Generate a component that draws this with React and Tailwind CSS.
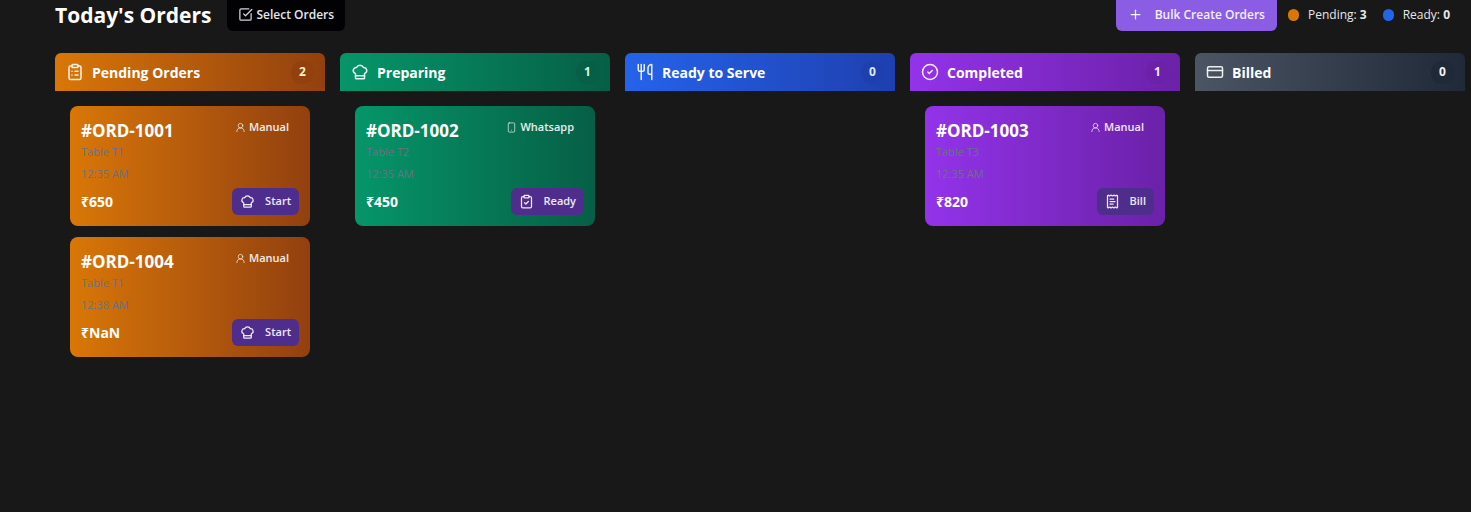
import {
  ClipboardList, ChefHat, CircleCheck, CreditCard, ClipboardCheck, Smartphone, SquareCheckBig, Plus,
  Utensils, UserRound, ReceiptText,
} from "lucide-react";

const columns = [
  {
    title: "Pending Orders", Icon: ClipboardList, count: 2,
    gradient: "from-[#d97706] to-[#92400e]", badge: "bg-[#92400e] text-[#fef3c7]",
    action: { label: "Start", Icon: ChefHat },
    orders: [
      { id: "ORD-1001", source: "Manual", table: "T1", time: "12:35 AM", total: "650" },
      { id: "ORD-1004", source: "Manual", table: "T1", time: "12:38 AM", total: "NaN" },
    ],
  },
  {
    title: "Preparing", Icon: ChefHat, count: 1,
    gradient: "from-[#059669] to-[#065f46]", badge: "bg-[#065f46] text-[#d1fae5]",
    action: { label: "Ready", Icon: ClipboardCheck },
    orders: [{ id: "ORD-1002", source: "Whatsapp", table: "T2", time: "12:35 AM", total: "450" }],
  },
  {
    title: "Ready to Serve", Icon: Utensils, count: 0,
    gradient: "from-[#2563eb] to-[#1e40af]", badge: "bg-[#1e40af] text-[#dbeafe]",
    orders: [],
  },
  {
    title: "Completed", Icon: CircleCheck, count: 1,
    gradient: "from-[#9333ea] to-[#6b21a8]", badge: "bg-[#6b21a8] text-[#f3e8ff]",
    action: { label: "Bill", Icon: ReceiptText },
    orders: [{ id: "ORD-1003", source: "Manual", table: "T3", time: "12:35 AM", total: "820" }],
  },
  {
    title: "Billed", Icon: CreditCard, count: 0,
    gradient: "from-[#4b5563] to-[#1f2937]", badge: "bg-[#1f2937] text-[#f3f4f6]",
    orders: [],
  },
];

function OrderCard({ order, gradient, action }) {
  const SourceIcon = order.source === "Whatsapp" ? Smartphone : UserRound;
  return (
    <article className={`flex flex-col rounded-lg bg-linear-to-r px-[11px] pt-3 pb-[11px] ${gradient}`}>
      <div className="flex items-start justify-between">
        <h3 className="text-[17px] leading-[26px] font-bold text-white">#{order.id}</h3>
        <span className="mr-[10px] flex items-center gap-[3px] text-[11px] leading-[18px] font-semibold text-white/90">
          <SourceIcon className="size-[11px] text-white/70" />
          {order.source}
        </span>
      </div>
      <p className="text-[11px] leading-[15px] text-gray-500">Table {order.table}</p>
      <p className="mt-[7px] text-[11px] leading-[15px] text-gray-500">{order.time}</p>
      <div className="mt-[7px] flex items-center justify-between">
        <span className="text-sm font-bold text-white">₹{order.total}</span>
        <button type="button" className="flex h-[27px] items-center gap-[10px] rounded-md bg-[#4f2d8c] px-2 text-[11px] font-semibold text-white/90">
          <action.Icon className="size-[15px]" />
          {action.label}
        </button>
      </div>
    </article>
  );
}

export default function App() {
  return (
    <main className="min-h-screen overflow-hidden bg-[#181818] pr-[6px] pl-[55px] font-['Open_Sans','Noto_Sans',sans-serif]">
      <header className="flex items-start justify-between pr-[15px]">
        <div className="flex items-start gap-[15px]">
          <h1 className="text-[21px] leading-[30px] font-bold text-white">Today's Orders</h1>
          <button type="button" className="flex h-[31px] items-center gap-1 rounded-b-md bg-[#020205] px-[11px] pb-[2px] text-xs font-semibold text-gray-200">
            <SquareCheckBig className="size-[15px] text-gray-300" />
            Select Orders
          </button>
        </div>
        <div className="flex items-start gap-[11px] text-xs text-gray-200">
          <button type="button" className="flex h-[31px] items-center gap-3 rounded-b-md bg-[#8b5ce4] px-3 pb-[2px] font-semibold text-white/90">
            <Plus className="size-[15px]" />
            Bulk Create Orders
          </button>
          <div className="flex h-[29px] items-center gap-4">
            <span className="flex items-center gap-[9px]">
              <span className="h-3 w-[11px] rounded-full bg-[#d97706]" />
              <span>Pending: <b>3</b></span>
            </span>
            <span className="flex items-center gap-[9px]">
              <span className="h-3 w-[11px] rounded-full bg-[#2563eb]" />
              <span>Ready: <b>0</b></span>
            </span>
          </div>
        </div>
      </header>
      <div className="mt-[22px] grid grid-cols-5 gap-[15px]">
        {columns.map(({ title, Icon, count, gradient, badge, action, orders }) => (
          <section key={title}>
            <div className={`flex h-[38px] items-center rounded-t-md bg-linear-to-r px-[11px] ${gradient}`}>
              <Icon className="size-[18px] text-white/90" />
              <h2 className="ml-2 pt-[2px] text-sm font-bold text-white">{title}</h2>
              <span className={`ml-auto flex size-[23px] items-center justify-center rounded-full text-xs font-bold ${badge}`}>{count}</span>
            </div>
            <div className="flex flex-col gap-[11px] p-[15px]">
              {orders.map((order) => (
                <OrderCard key={order.id} order={order} gradient={gradient} action={action} />
              ))}
            </div>
          </section>
        ))}
      </div>
    </main>
  );
}
